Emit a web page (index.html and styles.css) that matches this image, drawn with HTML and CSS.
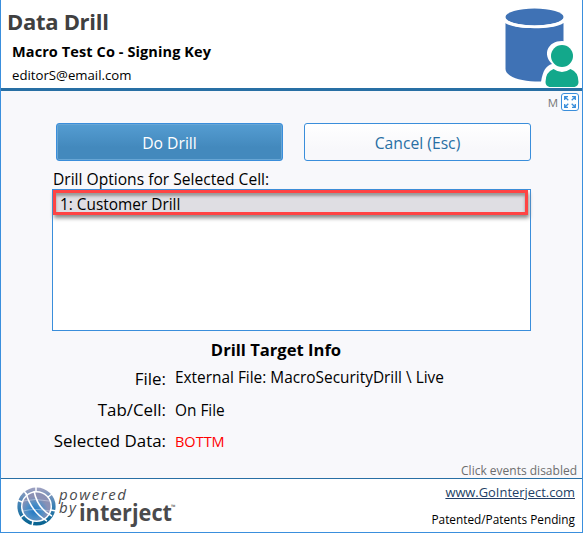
FILE: index.html
```
<!DOCTYPE html>
<html lang="en">
<head>
<meta charset="utf-8">
<title>Data Drill</title>
<link rel="stylesheet" href="styles.css">
</head>
<body>
<main class="window">
  <header class="header">
    <div class="heading">
      <h1 class="title"><span>Data Drill</span></h1>
      <p class="company"><span>Macro Test Co - Signing Key</span></p>
      <p class="email"><span>editorS@email.com</span></p>
    </div>
    <svg class="db" width="76" height="88" viewBox="0 0 76 88">
      <path d="M0.500 23C8 30 50 30 58.500 23V81.500H30C14 81 .5 76 .5 69Z" fill="#3f72b5"/>
      <ellipse cx="29.500" cy="17" rx="29" ry="8.500" fill="#3f72b5"/>
      <path d="M0 20C8 29 51 29 59 20" fill="none" stroke="#fff" stroke-width="2.500"/>
      <path d="M36 82C38 70 41 66 47 64C37 54 43 41 57 41C70 41 76 52 68 62C72 65 76 70 76 88H37Z" fill="#fff"/>
      <circle cx="57" cy="56" r="11" fill="#13a88b"/>
      <path d="M48.500 69Q57 75 65.500 69Q73.500 72 73.500 82Q73.500 86 69.500 87H44.500Q40.500 86 40.500 82Q40.500 72 48.500 69Z" fill="#13a88b"/>
    </svg>
  </header>
  <section class="body">
    <div class="tools"><span class="mode">M</span>
      <svg width="18" height="18" viewBox="0 0 18 18" fill="none" stroke="#3a8edb"><rect x=".5" y=".5" width="17" height="17" rx="2.500" fill="#fff"/><path d="M3.700 7V3.700H7M3.700 3.700L7.300 7.300M11 3.700H14.300V7M14.300 3.700L10.700 7.300M3.700 11V14.300H7M3.700 14.300L7.300 10.700M11 14.300H14.300V11M14.300 14.300L10.700 10.700" stroke-width="1.300"/></svg>
    </div>
    <div class="buttons"><button class="btn primary"><span>Do Drill</span></button><button class="btn"><span>Cancel (Esc)</span></button></div>
    <p class="list-label"><span>Drill Options for Selected Cell:</span></p>
    <div class="list"><div class="option"><span>1: Customer Drill</span></div></div>
    <h2 class="info-title"><span>Drill Target Info</span></h2>
    <dl class="info">
      <dt><span>File:</span></dt><dd class="v1"><span>External File: MacroSecurityDrill \ Live</span></dd>
      <dt><span>Tab/Cell:</span></dt><dd class="v2"><span>On File</span></dd>
      <dt><span>Selected Data:</span></dt><dd class="v3"><span>BOTTM</span></dd>
    </dl>
    <p class="status"><span>Click events disabled</span></p>
  </section>
  <footer class="footer">
    <svg class="logo" width="160" height="42" viewBox="0 0 160 42">
      <defs><linearGradient id="ring" x1="0" y1="0" x2="0" y2="1"><stop offset="0" stop-color="#9a9fc0"/><stop offset=".45" stop-color="#3f82b5"/><stop offset="1" stop-color="#086391"/></linearGradient><radialGradient id="globe" cx=".42" cy=".66"><stop offset="0" stop-color="#1f78c4"/><stop offset=".55" stop-color="#4f8fc6"/><stop offset="1" stop-color="#8b91b5"/></radialGradient></defs>
      <circle cx="20.500" cy="20.500" r="17.300" fill="none" stroke="url(#ring)" stroke-width="3.600"/>
      <circle cx="20.500" cy="20.500" r="14" fill="url(#globe)"/>
      <path d="M10 7C13 18 19 28 31 35M18 5C20 15 26 25 36 30" fill="none" stroke="#fff" stroke-width="1.500"/>
      <path d="M7 15Q19 12 33 15M7 25Q19 22 34 25" fill="none" stroke="#fff" stroke-opacity=".35"/>
      <path d="M1 14L6 16M4 32L8 29M16 40L17 35M36 8L32 11M40 25L35 24M20 1V6M8 5L11 9" fill="none" stroke="#fff" stroke-width="1.500"/>
      <g class="logo-words"><text x="43" y="14" class="small" textLength="67">powered</text><text x="43" y="27" class="small" textLength="17">by</text><text x="63" y="35" class="brand" textLength="93" lengthAdjust="spacingAndGlyphs">interject</text><text x="155" y="23" class="tm">™</text></g>
    </svg>
    <div class="credits"><a class="link"><span>www.GoInterject.com</span></a><p class="patent"><span>Patented/Patents Pending</span></p></div>
  </footer>
</main>
</body>
</html>
```
FILE: styles.css
```
* { box-sizing: border-box; }
body, h1, h2, p, dl, dd { margin: 0; }
body { font-family: "Open Sans", "Noto Sans", sans-serif; color: #000; }
.window { width: 583px; height: 533px; border: 1px solid #3a8fdd; border-top: 0; display: flex; flex-direction: column; background: #fff; white-space: nowrap; }
.header { flex: none; height: 91px; border-bottom: 3px solid #286fa4; display: flex; justify-content: space-between; overflow: hidden; }
.heading { padding-top: 7px; }
.title { padding-left: 6px; font-size: 22px; line-height: 28px; letter-spacing: -.3px; color: #404040; }
.company { padding-left: 11px; font-size: 14.500px; letter-spacing: .1px; font-weight: 700; line-height: 33px; }
.email { padding-left: 11px; font-size: 13.200px; line-height: 14px; }
.db { margin: 0 1px 0 0; }
.body { flex: none; height: 387px; background: #f8f8fb; display: flex; flex-direction: column; }
.body > * { flex: none; }
.tools { height: 32px; display: flex; justify-content: flex-end; gap: 3px; padding: 2px 3px 0 0; }
.mode { font-size: 11.500px; line-height: 20px; color: #777; }
.buttons { display: flex; gap: 21px; padding-left: 55px; }
.btn { width: 227px; height: 38px; border: 1px solid #3a8edb; border-radius: 3px; background: linear-gradient(#fff, #f8f8fb 70%); color: #286fa4; font: 15.700px/34px "Open Sans", sans-serif; padding: 2px 0 0; }
.primary { color: #fff; background: linear-gradient(#559dd2, #4389bd 65%); box-shadow: inset 0 0 0 1px #68a6d5; }
.list-label { font-size: 15.600px; line-height: 20px; padding: 8px 0 0 52px; }
.list { width: 479px; height: 142px; margin-left: 51px; border: 1px solid #3a8edb; background: #fff; }
.option { width: 475px; height: 25px; border: 3px solid #f44; background: #dfdee3; box-shadow: 1px 3px 4px #888, inset 0 3px 3px #999; padding-left: 4px; font-size: 15.400px; line-height: 23px; }
.info-title { font-size: 16.600px; line-height: 24px; margin-top: 7px; text-align: center; padding-right: 31px; }
.info { display: grid; grid-template-columns: 165px auto; grid-template-rows: repeat(3, 31px); column-gap: 9px; padding-top: 1px; }
.info dt { text-align: right; font-size: 16.900px; line-height: 31px; }
.info dd { font-size: 15.400px; line-height: 31px; }
.info .v1 { line-height: 30px; }
.info .v2 { line-height: 33px; }
.info .v3 { font-size: 14.500px; line-height: 33px; color: #f00; }
.status { font-size: 12px; line-height: 16px; text-align: right; padding: 7px 5px 0 0; color: #6d6d6d; }
.footer { flex: 1; border-top: 1px solid #286fa4; display: flex; justify-content: space-between; padding: 7px 7px 0 15px; }
.logo { overflow: visible; }
.credits { margin-top: -3px; text-align: right; }
.link { display: block; font-size: 12.900px; line-height: 18px; text-decoration: underline; color: #233f66; }
.patent { font-size: 11.800px; line-height: 18px; padding-top: 9px; }
.logo-words { font-family: "Open Sans", sans-serif; fill: #4a4a4c; }
.small { font-size: 15px; font-style: italic; }
.brand { font-size: 23px; font-weight: 700; }
.tm { font-size: 6px; }
```
